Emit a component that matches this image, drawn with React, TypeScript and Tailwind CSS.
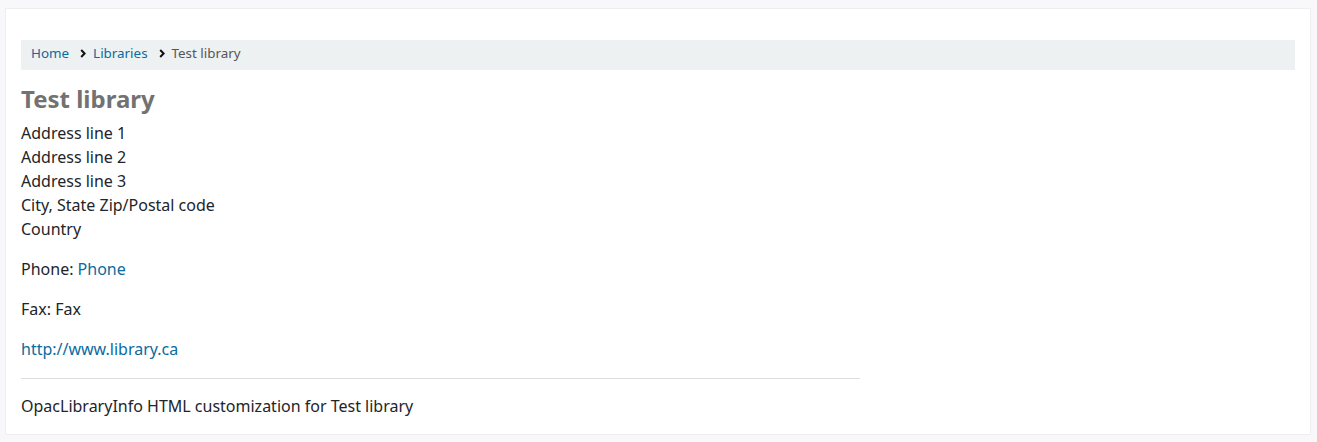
function Chevron() {
  return (
    <svg viewBox="0 0 6 9" className="mx-[7px] ml-[11px] h-[9px] w-[6px]" aria-hidden="true">
      <path d="M1.2 1 L4.6 4.5 L1.2 8" fill="none" stroke="#111" strokeWidth="2" />
    </svg>
  )
}

export default function App() {
  return (
    <div className="min-h-[442px] bg-[#f8f8fa] pt-2 pl-[5px] pr-[6px] pb-2 font-['Noto_Sans',sans-serif] text-[#212529]">
      <div className="border border-[#eeeef2] bg-white px-[15px] pt-[31px] pb-[16px]">
        <nav className="flex h-[30px] items-center bg-[#eef1f1] pb-[3px] pl-[10px] text-[13.4px]">
          <a className="text-[#0b6aa0]">Home</a>
          <Chevron />
          <a className="text-[#0b6aa0]">Libraries</a>
          <Chevron />
          <span className="text-[#555]">Test library</span>
        </nav>

        <h1 className="mt-[14px] text-[24px] leading-[29px] font-bold text-[#727272]">Test library</h1>

        <div className="mt-[8px] text-[16px] leading-6">
          <div>Address line 1</div>
          <div>Address line 2</div>
          <div>Address line 3</div>
          <div>City, State Zip/Postal code</div>
          <div>Country</div>

          <p className="mt-4">
            Phone: <a className="text-[#0b6aa0]">Phone</a>
          </p>
          <p className="mt-4">Fax: Fax</p>
          <p className="mt-4">
            <a className="text-[#0b6aa0]">http://www.library.ca</a>
          </p>

          <hr className="mt-[17px] mb-[15px] w-[839px] border-t border-[#dedede]" />

          <div>OpacLibraryInfo HTML customization for Test library</div>
        </div>
      </div>
    </div>
  )
}
